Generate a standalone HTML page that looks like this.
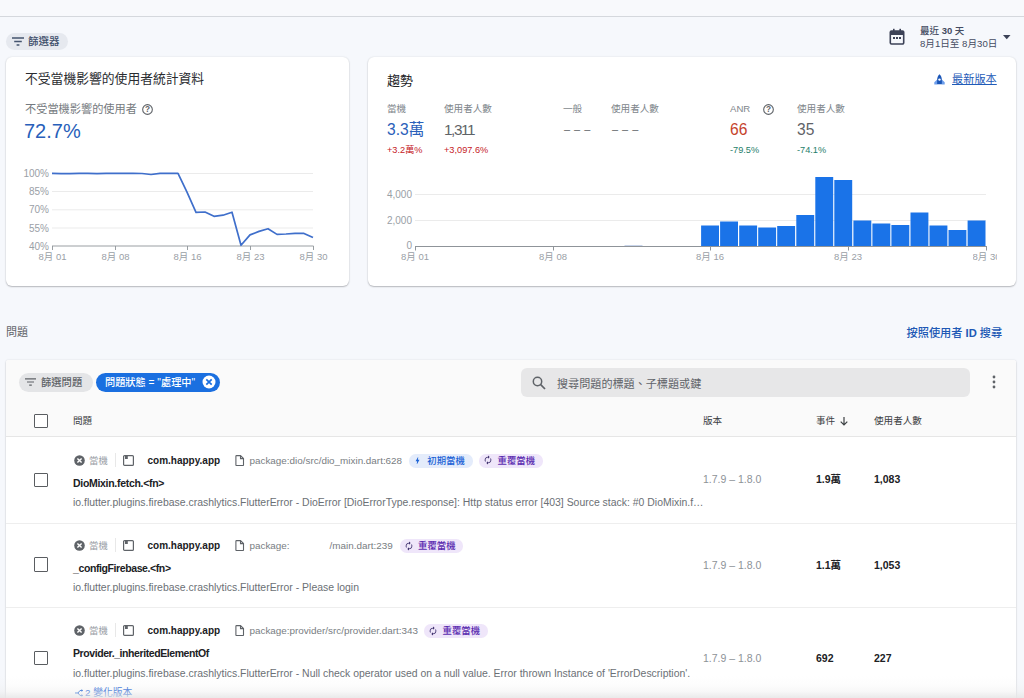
<!DOCTYPE html>
<html lang="zh-Hant">
<head>
<meta charset="utf-8">
<title>Crashlytics</title>
<style>
*{box-sizing:border-box;margin:0;padding:0}
html,body{width:1024px;height:698px;overflow:hidden}
body{background:#f6f8fc;font-family:"Liberation Sans","Noto Sans CJK TC",sans-serif;color:#202124;position:relative;font-size:11px}
.abs{position:absolute;white-space:nowrap}
.topline{left:0;top:16px;width:1024px;height:1px;background:#d5d8dd}
.topbg{left:0;top:0;width:1024px;height:16px;background:#f8f9fc}
.card{position:absolute;background:#fff;border-radius:6px;box-shadow:0 1px 1.5px rgba(40,40,45,.28),0 0 2px rgba(60,64,67,.14)}
.chip{position:absolute;border-radius:9.5px;height:19px;line-height:19px;font-size:11px;white-space:nowrap}
.t{position:absolute;white-space:nowrap;line-height:1}
.gray{color:#5f6368}
.lgray{color:#80868b}
.cb{position:absolute;width:14.5px;height:14.5px;border:1.5px solid #5a5d61;border-radius:1px;background:#fff}
svg{position:absolute;overflow:visible}
</style>
</head>
<body>
<div class="abs topbg"></div>
<div class="abs topline"></div>

<!-- filter chip -->
<div class="chip" style="left:6px;top:32.5px;width:62px;height:17.5px;background:#e6e9ef"></div>
<svg style="left:12px;top:37px" width="12" height="9" viewBox="0 0 12 9"><path d="M0 1h12M2.2 4.5h7.6M4.6 8h2.8" stroke="#44546f" stroke-width="1.4" fill="none"/></svg>
<div class="t" style="left:28px;top:36px;font-size:10.5px;font-weight:500;color:#3f4f6b">篩選器</div>

<!-- date range -->
<svg style="left:889px;top:28px" width="16" height="17" viewBox="0 0 16 17"><path d="M2.5 3h11a1.2 1.2 0 0 1 1.2 1.2v10.6a1.2 1.2 0 0 1-1.2 1.2h-11a1.2 1.2 0 0 1-1.2-1.2V4.200000000000001A1.2 1.2 0 0 1 2.5 3z" fill="none" stroke="#3c4257" stroke-width="1.6"/><rect x="1.3" y="3" width="13.4" height="4" fill="#3c4257"/><rect x="4" y="0.8" width="1.6" height="3" fill="#3c4257"/><rect x="10.4" y="0.8" width="1.6" height="3" fill="#3c4257"/><rect x="4" y="9" width="2" height="2" fill="#3c4257"/><rect x="7" y="9" width="2" height="2" fill="#3c4257"/><rect x="10" y="9" width="2" height="2" fill="#3c4257"/></svg>
<div class="t" style="left:920px;top:26px;font-size:9.5px;font-weight:500;color:#444b61">最近 <b>30</b> 天</div>
<div class="t" style="left:920px;top:39px;font-size:9.6px;color:#444b61">8月1日至 8月30日</div>
<svg style="left:1003px;top:35px" width="7.5" height="4.4" viewBox="0 0 9 5"><path d="M0 0h9L4.5 5z" fill="#3c4257"/></svg>

<!-- card 1 -->
<div class="card" style="left:6px;top:57px;width:343px;height:229px"></div>
<div class="t" style="left:25px;top:73px;font-size:12.8px;color:#2a2c30">不受當機影響的使用者統計資料</div>
<div class="t" style="left:25px;top:104px;font-size:11.2px;color:#757a80">不受當機影響的使用者</div>
<svg style="left:141.5px;top:104px" width="11" height="11" viewBox="0 0 10 10"><circle cx="5" cy="5" r="4.4" fill="none" stroke="#5f6368" stroke-width="1"/><text x="5" y="7.6" font-size="7.5" font-weight="700" text-anchor="middle" fill="#5f6368" font-family="Liberation Sans, sans-serif">?</text></svg>
<div class="t" style="left:24px;top:120.5px;font-size:20px;color:#285fba">72.7%</div>

<svg id="c1" style="left:0;top:150px" width="360" height="140" viewBox="0 150 360 140" font-family="Liberation Sans, Noto Sans CJK TC, sans-serif">
<g stroke="#ebebeb" stroke-width="1">
<line x1="52" x2="313" y1="173.5" y2="173.5"/><line x1="52" x2="313" y1="191.5" y2="191.5"/><line x1="52" x2="313" y1="209.8" y2="209.8"/><line x1="52" x2="313" y1="228" y2="228"/>
</g>
<g stroke="#8f9499" stroke-width="0.9"><line x1="52" x2="313.5" y1="246" y2="246"/><line x1="52.5" x2="52.5" y1="246" y2="250"/><line x1="115.5" x2="115.5" y1="246" y2="250"/><line x1="187.5" x2="187.5" y1="246" y2="250"/><line x1="250.5" x2="250.5" y1="246" y2="250"/><line x1="313.5" x2="313.5" y1="246" y2="250"/></g>
<g font-size="10" fill="#9aa0a6" text-anchor="end"><text x="49" y="177">100%</text><text x="49" y="195">85%</text><text x="49" y="213.200">70%</text><text x="49" y="231.500">55%</text><text x="49" y="249.500">40%</text></g>
<g font-size="9.5" fill="#9aa0a6" text-anchor="middle"><text x="52.5" y="260">8月 01</text><text x="115.5" y="260">8月 08</text><text x="187.5" y="260">8月 16</text><text x="250.5" y="260">8月 23</text><text x="313.5" y="260">8月 30</text></g>
<polyline fill="none" stroke="#3f6fcb" stroke-width="1.700" stroke-linejoin="round" points="52,173.4 61,173.7 70,173.7 79,173.4 88,173.4 97,173.7 106,173.4 115,173.4 124,173.4 133,173.4 142,173.5 151,174.5 160,173.4 169,173.4 178,173.4 187,192.1 196,212.4 205,212.0 214,216.3 223,215.2 232,212.2 241,245.3 250,234.9 259,231.4 268,228.7 277,234.4 286,234.0 295,233.4 304,233.4 313,237.6"/>
</svg>

<!-- card 2 -->
<div class="card" style="left:368px;top:57px;width:648px;height:229px"></div>
<div class="t" style="left:387px;top:73.5px;font-size:13px;color:#202124">趨勢</div>

<div class="t" style="left:387px;top:103.8px;font-size:9.6px;color:#80868b">當機</div>
<div class="t" style="left:444px;top:103.8px;font-size:9.6px;color:#80868b">使用者人數</div>
<div class="t" style="left:563px;top:103.8px;font-size:9.6px;color:#80868b">一般</div>
<div class="t" style="left:611px;top:103.8px;font-size:9.6px;color:#80868b">使用者人數</div>
<div class="t" style="left:730px;top:103.8px;font-size:9.6px;color:#80868b">ANR</div>
<div class="t" style="left:797px;top:103.8px;font-size:9.6px;color:#80868b">使用者人數</div>
<svg style="left:763px;top:103.5px" width="11" height="11" viewBox="0 0 10 10"><circle cx="5" cy="5" r="4.4" fill="none" stroke="#5f6368" stroke-width="1"/><text x="5" y="7.6" font-size="7.5" font-weight="700" text-anchor="middle" fill="#5f6368" font-family="Liberation Sans, sans-serif">?</text></svg>

<div class="t" style="left:387px;top:122.2px;font-size:15.6px;color:#2a60ba">3.3萬</div>
<div class="t" style="left:444px;top:122.2px;font-size:15.3px;color:#5f6368;letter-spacing:-1.4px">1,311</div>
<div class="t" style="left:564px;top:124px;font-size:11px;color:#5f6368;letter-spacing:4px">–––</div>
<div class="t" style="left:612px;top:124px;font-size:11px;color:#5f6368;letter-spacing:4px">–––</div>
<div class="t" style="left:730px;top:122.2px;font-size:15.6px;color:#c5432b">66</div>
<div class="t" style="left:797px;top:122.2px;font-size:15.6px;color:#5f6368">35</div>

<div class="t" style="left:387px;top:146px;font-size:9.2px;color:#c5221f">+3.2萬%</div>
<div class="t" style="left:444px;top:146px;font-size:9.2px;color:#c5221f">+3,097.6%</div>
<div class="t" style="left:730px;top:146px;font-size:9.2px;color:#1e7e6a">-79.5%</div>
<div class="t" style="left:797px;top:146px;font-size:9.2px;color:#1e7e6a">-74.1%</div>

<!-- latest version link -->
<svg style="left:933.5px;top:73.5px" width="11" height="11" viewBox="0 0 11 11"><path d="M0.300 10.600V8.200L3.200 5.600V10.600zM10.700 10.600V8.200L7.800 5.600V10.600z" fill="#6d9eeb"/><path d="M5.500 0.200C7.600 2 8.100 4.600 7.900 10.200H3.100C2.900 4.600 3.400 2 5.500 0.200z" fill="#1a56b8"/><circle cx="5.500" cy="5.600" r="1.200" fill="#fff"/></svg>
<div class="t" style="left:952px;top:73.5px;font-size:11.2px;font-weight:400;color:#1f5bb8;text-decoration:underline">最新版本</div>

<svg id="c2" style="left:368px;top:160px" width="656" height="126" viewBox="368 160 656 126" font-family="Liberation Sans, Noto Sans CJK TC, sans-serif">
<g stroke="#ebebeb" stroke-width="1"><line x1="415" x2="986" y1="194.5" y2="194.5"/><line x1="415" x2="986" y1="220.5" y2="220.5"/></g>
<g font-size="10" fill="#9aa0a6" text-anchor="end"><text x="412" y="197.500">4,000</text><text x="412" y="223.500">2,000</text><text x="412" y="249">0</text></g>
<g fill="#1a73e8" id="bars"><rect x="701.1" y="225.5" width="17.9" height="20.5"/><rect x="720.1" y="221.5" width="17.9" height="24.5"/><rect x="739.2" y="225.5" width="17.9" height="20.5"/><rect x="758.2" y="227.5" width="17.9" height="18.5"/><rect x="777.2" y="226.0" width="17.9" height="20.0"/><rect x="796.3" y="215.0" width="17.9" height="31.0"/><rect x="815.3" y="177.0" width="17.9" height="69.0"/><rect x="834.3" y="180.0" width="17.9" height="66.0"/><rect x="853.4" y="220.5" width="17.9" height="25.5"/><rect x="872.4" y="223.5" width="17.9" height="22.5"/><rect x="891.4" y="225.0" width="17.9" height="21.0"/><rect x="910.5" y="212.5" width="17.9" height="33.5"/><rect x="929.5" y="225.5" width="17.9" height="20.5"/><rect x="948.5" y="230.0" width="17.9" height="16.0"/><rect x="967.6" y="220.5" width="17.9" height="25.5"/></g>
<rect x="624.5" y="245" width="18" height="1" fill="#c8d4ea"/>
<g stroke="#8f9499" stroke-width="1"><line x1="415" x2="986.5" y1="246.5" y2="246.5"/><line x1="415.500" x2="415.5" y1="246" y2="250.500"/><line x1="553.5" x2="553.5" y1="246" y2="250.500"/><line x1="710.5" x2="710.5" y1="246" y2="250.500"/><line x1="848.5" x2="848.5" y1="246" y2="250.500"/><line x1="986.5" x2="986.5" y1="246" y2="250.500"/></g>
<g font-size="9.5" fill="#9aa0a6" text-anchor="middle"><text x="415" y="260">8月 01</text><text x="553" y="260">8月 08</text><text x="710" y="260">8月 16</text><text x="848" y="260">8月 23</text></g>
</svg>
<div class="t" style="left:972.5px;top:251.500px;width:24px;overflow:hidden;font-size:9.5px;color:#9aa0a6">8月 30</div>

<!-- issues header -->
<div class="t gray" style="left:6px;top:327px;font-size:11px">問題</div>
<div class="t" style="left:906.5px;top:327.5px;font-size:11.2px;font-weight:500;color:#2058b5">按照使用者 <b>ID</b> 搜尋</div>

<!-- issues card -->
<div class="card" style="left:6px;top:359.5px;width:1010px;height:360px;overflow:hidden;border-radius:2.5px">
  <div style="position:absolute;left:0;top:0;width:100%;height:77px;background:#fafafa;border-bottom:1px solid #e6e6e6"></div>
  <div style="position:absolute;left:0;top:163px;width:100%;height:1px;background:#eeeeee"></div>
  <div style="position:absolute;left:0;top:247.5px;width:100%;height:1px;background:#eeeeee"></div>
</div>

<div class="chip" style="left:19px;top:372.5px;width:73.500px;background:#e4e5e7"></div>
<svg style="left:25px;top:378px" width="11" height="8" viewBox="0 0 11 8"><path d="M0 0.800h11M2 4h7M4.200 7.200h2.600" stroke="#5f6368" stroke-width="1.200" fill="none"/></svg>
<div class="t" style="left:41px;top:377.500px;font-size:10.3px;color:#5f6368;font-weight:500">篩選問題</div>

<div class="chip" style="left:95.500px;top:372.5px;width:124.500px;background:#1a6fe0"></div>
<div class="t" style="left:105px;top:377.500px;font-size:10.2px;color:#fff;font-weight:500">問題狀態 = "處理中"</div>
<svg style="left:202px;top:375px" width="14" height="14" viewBox="0 0 14 14"><circle cx="7" cy="7" r="6.500" fill="#fff"/><path d="M4.300 4.300l5.400 5.400M9.700 4.300l-5.400 5.400" stroke="#1a6fe0" stroke-width="1.700"/></svg>

<!-- search -->
<div class="abs" style="left:520.500px;top:368px;width:449px;height:29px;border-radius:6px;background:#e7e7e8"></div>
<svg style="left:532px;top:376px" width="14" height="14" viewBox="0 0 14 14"><circle cx="5.500" cy="5.500" r="4.200" fill="none" stroke="#5f6368" stroke-width="1.500"/><path d="M8.700 8.700L13 13" stroke="#5f6368" stroke-width="1.700"/></svg>
<div class="t" style="left:557px;top:378.500px;font-size:11.1px;color:#5f6368">搜尋問題的標題、子標題或鍵</div>
<svg style="left:991.700px;top:375px" width="4" height="14" viewBox="0 0 4 14"><circle cx="2" cy="2" r="1.400" fill="#5f6368"/><circle cx="2" cy="7" r="1.400" fill="#5f6368"/><circle cx="2" cy="12" r="1.400" fill="#5f6368"/></svg>

<!-- table header -->
<div class="cb" style="left:33.500px;top:413.500px"></div>
<div class="t" style="left:73px;top:415.5px;font-size:9.6px;color:#3c4043">問題</div>
<div class="t" style="left:703px;top:415.5px;font-size:9.6px;color:#3c4043">版本</div>
<div class="t" style="left:816px;top:415.5px;font-size:9.6px;color:#3c4043">事件</div>
<svg style="left:840px;top:416.5px" width="8" height="9" viewBox="0 0 8 9"><path d="M4 0v8M0.700 4.700L4 8l3.300-3.300" stroke="#3c4043" stroke-width="1.200" fill="none"/></svg>
<div class="t" style="left:874px;top:415.5px;font-size:9.6px;color:#3c4043">使用者人數</div>

<div class="abs" style="left:0;top:676px;width:1024px;height:22px;background:linear-gradient(to bottom,rgba(234,234,234,0) 0%,rgba(234,234,234,0.12) 40%,rgba(234,234,234,0.35) 70%,rgba(230,230,230,0.85) 100%);z-index:5"></div>
<div id="rows">
<div class="cb" style="left:33.5px;top:472.5px"></div>
<svg style="left:74px;top:455.0px" width="11" height="11" viewBox="0 0 11 11"><circle cx="5.5" cy="5.5" r="5.3" fill="#5f6368"/><path d="M3.4 3.4l4.200 4.200M7.600 3.400l-4.200 4.200" stroke="#fff" stroke-width="1.400"/></svg>
<div class="t" style="left:89px;top:456.0px;font-size:9.4px;color:#9aa0a6">當機</div>
<div class="abs" style="left:115px;top:453.0px;width:1px;height:14px;background:#e8e8e8"></div>
<svg style="left:123px;top:455.0px" width="11" height="11" viewBox="0 0 11 11"><rect x="0.6" y="0.6" width="9.8" height="9.8" rx="1" fill="none" stroke="#5f6368" stroke-width="1.200"/><rect x="2" y="0.600" width="2.800" height="3.400" fill="#5f6368"/></svg>
<div class="t" style="left:147.5px;top:456.2px;font-size:10px;font-weight:700;color:#202124">com.happy.app</div>
<svg style="left:235px;top:455.0px" width="9" height="11" viewBox="0 0 9 11"><path d="M1.5 0.600h4l3 3v6.300a0.600 0.600 0 0 1-0.600 0.600h-6.400a0.600 0.600 0 0 1-0.600-0.600v-8.700a0.600 0.600 0 0 1 0.600-0.600zM5.500 0.600v3h3" fill="none" stroke="#5f6368" stroke-width="1.100"/></svg>
<div class="t" style="left:249.5px;top:456.0px;font-size:9.9px;color:#787d82">package:dio/src/dio_mixin.dart:628</div>
<div class="abs" style="left:409.0px;top:454.0px;width:63.5px;height:13.5px;border-radius:6.75px;background:#e4ecfb"></div>
<svg style="left:413.3px;top:455.9px" width="9" height="9" viewBox="0 0 24 24"><path d="M11 21h-1l1-7H7.500c-.880 0-.330-.750-.310-.780C8.480 10.940 10.420 7.540 13.010 3h1l-1 7h3.510c.4 0 .620.190.4.660C12.970 17.550 11 21 11 21z" fill="#1a62d6"/></svg>
<div class="t" style="left:427.3px;top:456.0px;font-size:9.4px;font-weight:500;color:#1a62d6">初期當機</div>
<div class="abs" style="left:479.0px;top:454.0px;width:63.5px;height:13.5px;border-radius:6.75px;background:#efe6fa"></div>
<svg style="left:483.2px;top:455.4px" width="10" height="10" viewBox="0 0 24 24"><path d="M12 6v3l4-4-4-4v3c-4.420 0-8 3.580-8 8 0 1.570.460 3.030 1.240 4.260L6.700 14.800c-.450-.830-.7-1.790-.7-2.800 0-3.310 2.690-6 6-6zm6.760 1.740L17.300 9.200c.440.840.7 1.790.7 2.800 0 3.310-2.690 6-6 6v-3l-4 4 4 4v-3c4.420 0 8-3.580 8-8 0-1.570-.460-3.030-1.240-4.260z" fill="#3b2d6b"/></svg>
<div class="t" style="left:497.5px;top:456.0px;font-size:9.4px;font-weight:500;color:#5b2bb0">重覆當機</div>
<div class="t" style="left:73px;top:478.0px;font-size:10.5px;font-weight:700;color:#202124;letter-spacing:-0.30px">DioMixin.fetch.&lt;fn&gt;</div>
<div class="t" style="left:73px;top:498.0px;font-size:10.45px;color:#6b7075">io.flutter.plugins.firebase.crashlytics.FlutterError - DioError [DioErrorType.response]: Http status error [403] Source stack: #0 DioMixin.f…</div>
<div class="t" style="left:703px;top:474.0px;font-size:10.500px;color:#8d9297">1.7.9 – 1.8.0</div>
<div class="t" style="left:816px;top:474.0px;font-size:10.500px;font-weight:700;color:#202124">1.9萬</div>
<div class="t" style="left:874px;top:474.0px;font-size:10.500px;font-weight:700;color:#202124">1,083</div>
<div class="cb" style="left:33.5px;top:557.0px"></div>
<svg style="left:74px;top:540.0px" width="11" height="11" viewBox="0 0 11 11"><circle cx="5.5" cy="5.5" r="5.3" fill="#5f6368"/><path d="M3.4 3.4l4.200 4.200M7.600 3.400l-4.200 4.200" stroke="#fff" stroke-width="1.400"/></svg>
<div class="t" style="left:89px;top:541.0px;font-size:9.4px;color:#9aa0a6">當機</div>
<div class="abs" style="left:115px;top:538.0px;width:1px;height:14px;background:#e8e8e8"></div>
<svg style="left:123px;top:540.0px" width="11" height="11" viewBox="0 0 11 11"><rect x="0.6" y="0.6" width="9.8" height="9.8" rx="1" fill="none" stroke="#5f6368" stroke-width="1.200"/><rect x="2" y="0.600" width="2.800" height="3.400" fill="#5f6368"/></svg>
<div class="t" style="left:147.5px;top:541.2px;font-size:10px;font-weight:700;color:#202124">com.happy.app</div>
<svg style="left:235px;top:540.0px" width="9" height="11" viewBox="0 0 9 11"><path d="M1.5 0.600h4l3 3v6.300a0.600 0.600 0 0 1-0.600 0.600h-6.400a0.600 0.600 0 0 1-0.600-0.600v-8.700a0.600 0.600 0 0 1 0.600-0.600zM5.500 0.600v3h3" fill="none" stroke="#5f6368" stroke-width="1.100"/></svg>
<div class="t" style="left:249.5px;top:541.0px;font-size:9.9px;color:#787d82">package:<span style="display:inline-block;width:40px"></span>/main.dart:239</div>
<div class="abs" style="left:399.5px;top:539.0px;width:63.0px;height:13.5px;border-radius:6.75px;background:#efe6fa"></div>
<svg style="left:403.8px;top:540.5px" width="10" height="10" viewBox="0 0 24 24"><path d="M12 6v3l4-4-4-4v3c-4.420 0-8 3.580-8 8 0 1.570.460 3.030 1.240 4.260L6.700 14.800c-.450-.830-.7-1.790-.7-2.800 0-3.310 2.690-6 6-6zm6.760 1.740L17.300 9.200c.440.840.7 1.790.7 2.800 0 3.310-2.690 6-6 6v-3l-4 4 4 4v-3c4.420 0 8-3.580 8-8 0-1.570-.460-3.030-1.240-4.260z" fill="#3b2d6b"/></svg>
<div class="t" style="left:418.0px;top:541.0px;font-size:9.4px;font-weight:500;color:#5b2bb0">重覆當機</div>
<div class="t" style="left:73px;top:563.0px;font-size:10.5px;font-weight:700;color:#202124;letter-spacing:-0.40px">_configFirebase.&lt;fn&gt;</div>
<div class="t" style="left:73px;top:583.0px;font-size:10.45px;color:#6b7075">io.flutter.plugins.firebase.crashlytics.FlutterError - Please login</div>
<div class="t" style="left:703px;top:559.5px;font-size:10.500px;color:#8d9297">1.7.9 – 1.8.0</div>
<div class="t" style="left:816px;top:559.5px;font-size:10.500px;font-weight:700;color:#202124">1.1萬</div>
<div class="t" style="left:874px;top:559.5px;font-size:10.500px;font-weight:700;color:#202124">1,053</div>
<div class="cb" style="left:33.5px;top:650.5px"></div>
<svg style="left:74px;top:625.0px" width="11" height="11" viewBox="0 0 11 11"><circle cx="5.5" cy="5.5" r="5.3" fill="#5f6368"/><path d="M3.4 3.4l4.200 4.200M7.600 3.400l-4.200 4.200" stroke="#fff" stroke-width="1.400"/></svg>
<div class="t" style="left:89px;top:626.0px;font-size:9.4px;color:#9aa0a6">當機</div>
<div class="abs" style="left:115px;top:623.0px;width:1px;height:14px;background:#e8e8e8"></div>
<svg style="left:123px;top:625.0px" width="11" height="11" viewBox="0 0 11 11"><rect x="0.6" y="0.6" width="9.8" height="9.8" rx="1" fill="none" stroke="#5f6368" stroke-width="1.200"/><rect x="2" y="0.600" width="2.800" height="3.400" fill="#5f6368"/></svg>
<div class="t" style="left:147.5px;top:626.2px;font-size:10px;font-weight:700;color:#202124">com.happy.app</div>
<svg style="left:235px;top:625.0px" width="9" height="11" viewBox="0 0 9 11"><path d="M1.5 0.600h4l3 3v6.300a0.600 0.600 0 0 1-0.600 0.600h-6.400a0.600 0.600 0 0 1-0.600-0.600v-8.700a0.600 0.600 0 0 1 0.600-0.600zM5.500 0.600v3h3" fill="none" stroke="#5f6368" stroke-width="1.100"/></svg>
<div class="t" style="left:249.5px;top:626.0px;font-size:9.9px;color:#787d82">package:provider/src/provider.dart:343</div>
<div class="abs" style="left:424.0px;top:624.0px;width:63.5px;height:13.5px;border-radius:6.75px;background:#efe6fa"></div>
<svg style="left:428.2px;top:625.5px" width="10" height="10" viewBox="0 0 24 24"><path d="M12 6v3l4-4-4-4v3c-4.420 0-8 3.580-8 8 0 1.570.460 3.030 1.240 4.260L6.700 14.800c-.450-.830-.7-1.790-.7-2.800 0-3.310 2.690-6 6-6zm6.760 1.740L17.300 9.200c.440.840.7 1.790.7 2.800 0 3.310-2.690 6-6 6v-3l-4 4 4 4v-3c4.420 0 8-3.580 8-8 0-1.570-.460-3.030-1.240-4.260z" fill="#3b2d6b"/></svg>
<div class="t" style="left:442.5px;top:626.0px;font-size:9.4px;font-weight:500;color:#5b2bb0">重覆當機</div>
<div class="t" style="left:73px;top:648.0px;font-size:10.5px;font-weight:700;color:#202124;letter-spacing:-0.42px">Provider._inheritedElementOf</div>
<div class="t" style="left:73px;top:668.5px;font-size:10.45px;color:#6b7075">io.flutter.plugins.firebase.crashlytics.FlutterError - Null check operator used on a null value. Error thrown Instance of 'ErrorDescription'.</div>
<div class="t" style="left:703px;top:653.0px;font-size:10.500px;color:#8d9297">1.7.9 – 1.8.0</div>
<div class="t" style="left:816px;top:653.0px;font-size:10.500px;font-weight:700;color:#202124">692</div>
<div class="t" style="left:874px;top:653.0px;font-size:10.500px;font-weight:700;color:#202124">227</div>
<svg style="left:75px;top:688.5px" width="8" height="8" viewBox="0 0 8 8"><path d="M0 4h3l2-2.500h2.500M3 4l2 2.500h2.500" fill="none" stroke="#1a62d6" stroke-width="1"/><path d="M6.500 0l1.500 1.500-1.500 1.500zM6.500 5l1.500 1.500-1.500 1.500z" fill="#1a62d6"/></svg><div class="t" style="left:85px;top:688px;font-size:9.8px;color:#1a62d6">2 變化版本</div>
</div>

</body>
</html>
